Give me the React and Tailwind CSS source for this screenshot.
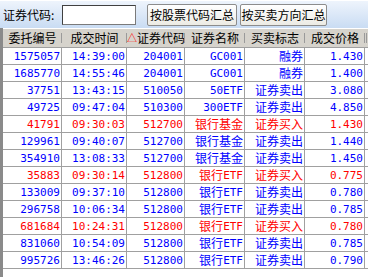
import React from 'react';

const rows = [
  ['1575057', '14:39:00', '204001', 'GC001', '融券', '1.430', 'b'],
  ['1685770', '14:55:46', '204001', 'GC001', '融券', '1.400', 'b'],
  ['37751', '13:43:15', '510050', '50ETF', '证券卖出', '3.080', 'b'],
  ['49725', '09:47:04', '510300', '300ETF', '证券卖出', '4.850', 'b'],
  ['41791', '09:30:03', '512700', '银行基金', '证券买入', '1.430', 'r'],
  ['129961', '09:40:07', '512700', '银行基金', '证券卖出', '1.440', 'b'],
  ['354910', '13:08:33', '512700', '银行基金', '证券卖出', '1.450', 'b'],
  ['35883', '09:30:14', '512800', '银行ETF', '证券买入', '0.775', 'r'],
  ['133009', '09:37:10', '512800', '银行ETF', '证券卖出', '0.780', 'b'],
  ['296758', '10:06:34', '512800', '银行ETF', '证券卖出', '0.785', 'b'],
  ['681684', '10:24:31', '512800', '银行ETF', '证券买入', '0.780', 'r'],
  ['831060', '10:54:09', '512800', '银行ETF', '证券卖出', '0.785', 'b'],
  ['995726', '13:46:26', '512800', '银行ETF', '证券卖出', '0.790', 'b'],
];

const widths = ['w-[59px]', 'w-[65px]', 'w-[58px]', 'w-[60px]', 'w-[60px]', 'w-[60px]'];

// split into ascii / CJK runs so each gets its own font size
const Mixed = ({ text }) => {
  const parts = text.match(/[\x00-\x7f]+|[^\x00-\x7f]+/g) || [];
  return parts.map((p, i) =>
    /^[\x00-\x7f]/.test(p) ? (
      <span key={i} className="text-[11px] font-['DejaVu_Sans_Mono',monospace]">{p}</span>
    ) : (
      <span key={i} className="text-[12px] font-['Noto_Sans_CJK_SC',sans-serif]">{p}</span>
    )
  );
};

const headers = ['委托编号', '成交时间', '证券代码', '证券名称', '买卖标志', '成交价格'];

export default function App() {
  return (
    <div className="w-[368px] h-[277px] overflow-hidden bg-white flex flex-col font-['Noto_Sans_CJK_SC',sans-serif] text-[12px] text-black">
      <div className="h-[28px] shrink-0 flex items-center bg-gradient-to-b from-[#eef4fc] to-[#c9dcf3] border-t border-white">
        <span className="ml-[3px] w-[58px] leading-none whitespace-nowrap">证券代码:</span>
        <div className="ml-[1px] w-[74px] h-[20px] bg-white border border-[#7a7a7a] border-t-[#404040] border-l-[#404040]" />
        <button className="ml-[11px] w-[90px] h-[22px] rounded-[2px] border border-[#8c8c8c] bg-gradient-to-b from-white to-[#ecebe4] leading-none whitespace-nowrap">
          按股票代码汇总
        </button>
        <button className="ml-[3px] w-[87px] h-[22px] rounded-[2px] border border-[#8c8c8c] bg-gradient-to-b from-white to-[#ecebe4] leading-none whitespace-nowrap">
          按买卖方向汇总
        </button>
      </div>
      <div className="flex-1 flex flex-col border-l-[3px] border-[#8a8a8a]">
        <div className="h-[20px] shrink-0 flex bg-[#d6d3cc] border-t border-white border-b border-b-[#a0a0a0]">
          {headers.map((h, i) => (
            <div key={i} className={`${widths[i]} shrink-0 relative flex items-center justify-center leading-none whitespace-nowrap`}>
              {i === 2 && <span className="text-[#ff0000] text-[10px] leading-none">△</span>}
              {h}
              <span className="absolute right-0 top-[4px] h-[10px] w-[1px] bg-[#9a9a9a]" />
            </div>
          ))}
          <div className="flex-1 relative">
            <span className="absolute left-[1px] top-[4px] h-[10px] w-[1px] bg-[#9a9a9a]" />
          </div>
        </div>
        {rows.map((r, ri) => (
          <div
            key={ri}
            className={`h-[17px] shrink-0 flex border-b border-[#a0a0a0] ${r[6] === 'r' ? 'text-[#ff0000]' : 'text-[#0000ff]'}`}
          >
            {r.slice(0, 6).map((c, ci) => (
              <div key={ci} className={`${widths[ci]} shrink-0 border-r border-[#a0a0a0] flex items-center justify-end pr-[1px] leading-none whitespace-nowrap overflow-hidden`}>
                <Mixed text={c} />
              </div>
            ))}
            <div className="flex-1" />
          </div>
        ))}
      </div>
    </div>
  );
}
